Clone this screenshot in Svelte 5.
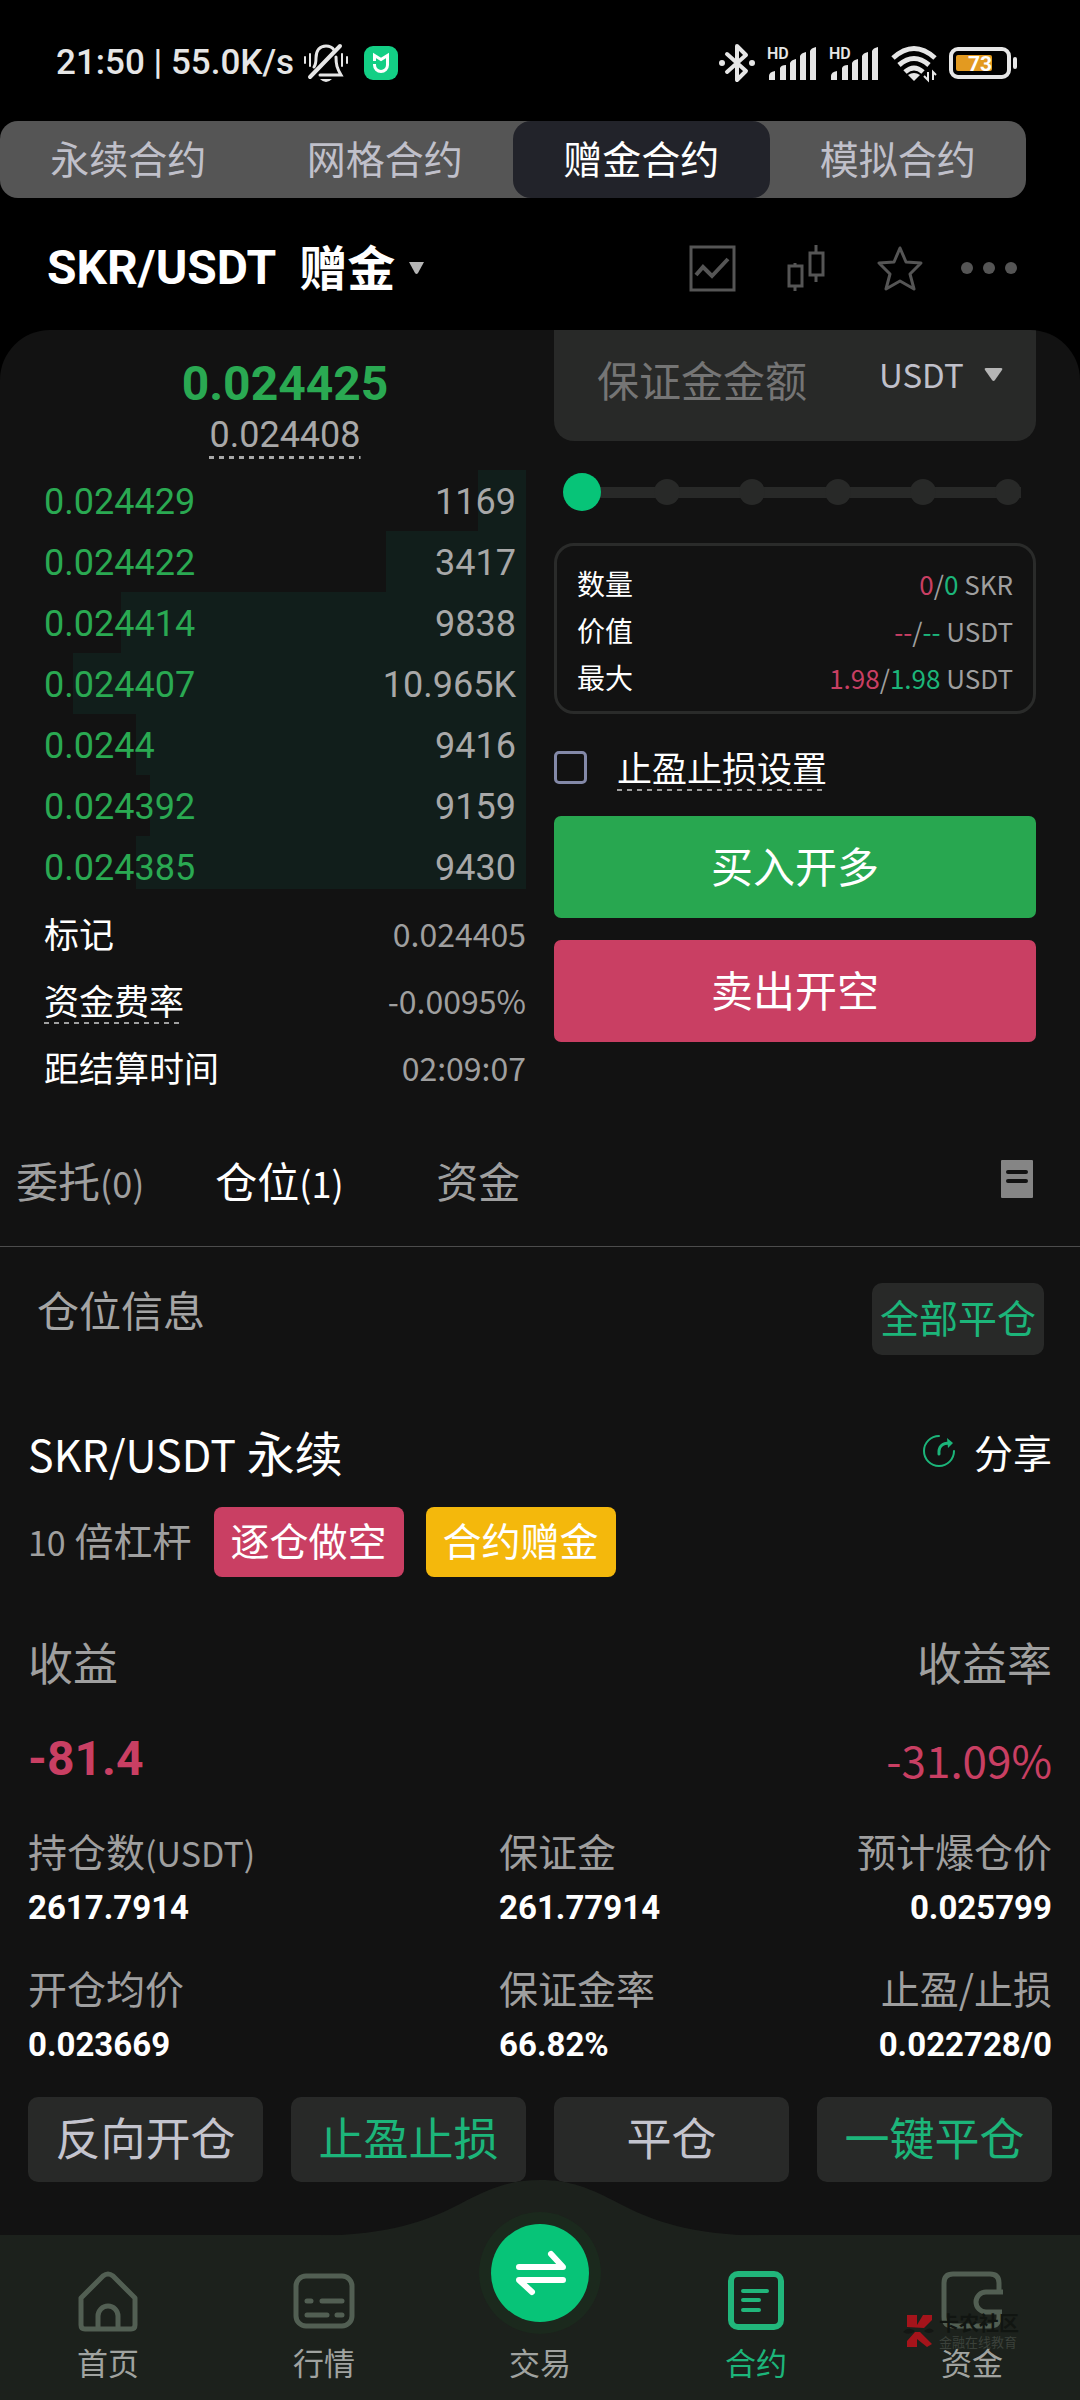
<script lang="ts">
  const modes = ['永续合约', '网格合约', '赠金合约', '模拟合约'];
  let mode = $state('赠金合约');

  // depth: share of the column width covered by the bar
  const bids = [
    { price: '0.024429', amount: '1169', depth: 10 },
    { price: '0.024422', amount: '3417', depth: 29 },
    { price: '0.024414', amount: '9838', depth: 84 },
    { price: '0.024407', amount: '10.965K', depth: 94 },
    { price: '0.0244', amount: '9416', depth: 81 },
    { price: '0.024392', amount: '9159', depth: 78 },
    { price: '0.024385', amount: '9430', depth: 81 }
  ];

  const limits = [
    { label: '数量', short: '0', long: '0', unit: 'SKR' },
    { label: '价值', short: '--', long: '--', unit: 'USDT' },
    { label: '最大', short: '1.98', long: '1.98', unit: 'USDT' }
  ];

  const lists = [
    { label: '委托', count: '(0)' },
    { label: '仓位', count: '(1)' },
    { label: '资金', count: '' }
  ];
  let list = $state('仓位');

  const details = [
    { label: '持仓数', unit: '(USDT)', value: '2617.7914' },
    { label: '保证金', unit: '', value: '261.77914' },
    { label: '预计爆仓价', unit: '', value: '0.025799' },
    { label: '开仓均价', unit: '', value: '0.023669' },
    { label: '保证金率', unit: '', value: '66.82%' },
    { label: '止盈/止损', unit: '', value: '0.022728/0' }
  ];

  const actions = [
    { label: '反向开仓', accent: false },
    { label: '止盈止损', accent: true },
    { label: '平仓', accent: false },
    { label: '一键平仓', accent: true }
  ];

  let percent = $state(0);
  let stopLoss = $state(false);
</script>

{#snippet signal()}
  <svg width="50" height="36" viewBox="0 0 50 36" fill="#e6e6e6">
    <text class="hd" x="0" y="14">HD</text>
    <path d="M2 31q0-4 6-5v9h-6zM13 23q1-3 6-3v15h-6zM23 18q1-3 6-4v21h-6zM33 11q1-3 6-4v28h-6zM43 6q1-3 6-4v33h-6z" />
  </svg>
{/snippet}

<div class="app">
  <div class="status">
    <div class="status-left">
      <span>21:50 | 55.0K/s</span>
      <svg width="46" height="40" viewBox="0 0 46 40" fill="none" stroke="#e6e6e6" stroke-width="3" stroke-linecap="round">
        <path d="M2 14v6M7 11v12M39 11v12M44 14v6" stroke-width="2" />
        <path d="M11 24c2-3 2-6 2-9C13 7 17 3 23 3c4 0 6 1 8 4M33 14c0 8 1 11 5 18H17" />
        <path d="M7 34L37 3" stroke-width="4" />
        <path d="M17 36h12q-6 6-12 0z" fill="#e6e6e6" stroke="none" />
      </svg>
      <svg class="mi" width="34" height="34" viewBox="0 0 34 34">
        <rect width="34" height="34" rx="9" fill="#13cf85" />
        <path d="M10.500 15V9.500l6.500 4 6.500-4V15M10.500 18v1a6.500 6.500 0 0 0 13 0v-5" fill="none" stroke="#fff" stroke-width="3" />
      </svg>
    </div>
    <div class="status-right">
      <svg width="36" height="40" viewBox="0 0 36 40" fill="none" stroke="#e6e6e6" stroke-width="4" stroke-linejoin="round" stroke-linecap="round">
        <path d="M8 11l19 17-9 9V3l9 9L8 29" />
        <circle cx="3" cy="20" r="3" fill="#e6e6e6" stroke="none" />
        <circle cx="33" cy="20" r="3" fill="#e6e6e6" stroke="none" />
      </svg>
      {@render signal()}
      {@render signal()}
      <svg width="46" height="36" viewBox="0 0 46 36" fill="none" stroke="#e6e6e6" stroke-width="5">
        <path d="M2 13q21-19 42 0M8 20q15-13 30 0M14 27q9-8 18 0" />
        <path d="M17 30q6-4 12 0l-6 6z" fill="#e6e6e6" stroke="none" />
        <path d="M37 27v8l-4-4M42 35v-8l3 3" stroke-width="2" />
      </svg>
      <svg width="68" height="32" viewBox="0 0 68 32">
        <rect x="2" y="2" width="58" height="28" rx="7" fill="none" stroke="#e6e6e6" stroke-width="4" />
        <rect x="7" y="8" width="36" height="16" rx="2" fill="#e39a20" />
        <rect x="64" y="10" width="4" height="12" rx="2" fill="#e6e6e6" />
        <text class="charge" x="31" y="24">73</text>
      </svg>
    </div>
  </div>

  <div class="modes">
    {#each modes as item}
      <button class:active={item === mode} onclick={() => (mode = item)}>{item}</button>
    {/each}
  </div>

  <header>
    <button class="pair">
      <span class="pair-name">SKR/USDT</span>
      <span class="pair-type">赠金</span>
      <svg width="17" height="14" viewBox="0 0 17 14"><path d="M1 1h15L10 12q-1.500 2-3 0z" fill="#b5b5b5" /></svg>
    </button>
    <div class="tools">
      <button aria-label="分时">
        <svg width="46" height="46" viewBox="0 0 46 46" fill="none" stroke="#555" stroke-width="3">
          <rect x="2" y="2" width="43" height="43" />
          <path d="M7 30l7-8 9 9 16-17" stroke-width="4" />
        </svg>
      </button>
      <button aria-label="K线">
        <svg width="46" height="46" viewBox="0 0 46 46" fill="none" stroke="#555" stroke-width="3">
          <path d="M6 21h13v20H6zM12 18v3M12 41v5M27 8h13v22H27zM33 0v8M33 30v7" />
        </svg>
      </button>
      <button aria-label="收藏">
        <svg width="46" height="46" viewBox="0 0 46 46" fill="none" stroke="#555" stroke-width="3" stroke-linejoin="round">
          <path d="M23 3l6 14 15 1-11 11 4 15-14-8-14 8 4-15L2 18l15-1z" />
        </svg>
      </button>
      <button aria-label="更多">
        <svg width="56" height="14" viewBox="0 0 56 14" fill="#555">
          <circle cx="6" cy="7" r="6" /><circle cx="28" cy="7" r="6" /><circle cx="50" cy="7" r="6" />
        </svg>
      </button>
    </div>
  </header>

  <main>
    <section class="trade">
      <div class="book">
        <div class="last">0.024425</div>
        <div class="index"><span>0.024408</span></div>
        <div class="bids">
          {#each bids as bid}
            <div class="bid">
              <div class="depth" style="width: {bid.depth}%"></div>
              <span class="price">{bid.price}</span>
              <span class="amount">{bid.amount}</span>
            </div>
          {/each}
        </div>
        <dl class="rates">
          <div><dt>标记</dt><dd>0.024405</dd></div>
          <div><dt class="dashed">资金费率</dt><dd>-0.0095%</dd></div>
          <div><dt>距结算时间</dt><dd>02:09:07</dd></div>
        </dl>
      </div>

      <div class="order">
        <div class="margin">
          <input type="text" placeholder="保证金金额" aria-label="保证金金额" />
          <select aria-label="单位"><option>USDT</option></select>
          <svg width="19" height="15" viewBox="0 0 19 15"><path d="M2 1h15q2 0 1 2l-7 10q-1.500 2-3 0L1 3q-1-2 1-2z" fill="#b5b5b5" /></svg>
        </div>

        <div class="slider">
          <div class="stops">
            {#each Array(6) as _}<i></i>{/each}
          </div>
          <input type="range" min="0" max="100" step="20" bind:value={percent} aria-label="保证金比例" />
        </div>

        <div class="limits">
          {#each limits as row}
            <div>
              <span>{row.label}</span>
              <span class="values"><span class="red">{row.short}</span>/<span class="green">{row.long}</span> {row.unit}</span>
            </div>
          {/each}
        </div>

        <label class="stop">
          <input type="checkbox" bind:checked={stopLoss} />
          <span class="dashed">止盈止损设置</span>
        </label>

        <button class="submit buy">买入开多</button>
        <button class="submit sell">卖出开空</button>
      </div>
    </section>

    <div class="lists">
      {#each lists as item}
        <button class:active={item.label === list} onclick={() => (list = item.label)}>{item.label}<span>{item.count}</span></button>
      {/each}
      <button class="records" aria-label="记录">
        <svg width="32" height="38" viewBox="0 0 32 38">
          <rect width="32" height="38" rx="1" fill="#858585" />
          <path d="M7 12h18M7 21h18" stroke="#121212" stroke-width="4" stroke-linecap="round" />
        </svg>
      </button>
    </div>

    <div class="summary">
      <span>仓位信息</span>
      <button>全部平仓</button>
    </div>

    <section class="position">
      <div class="title">
        <h2><span>SKR/USDT</span> 永续</h2>
        <button class="share">
          <svg width="33" height="34" viewBox="0 0 33 34" fill="none" stroke="#1cb57a" stroke-width="2" stroke-linecap="round">
            <path d="M16 2A15 15 0 1 0 31 17" />
            <path d="M16 20q-1-11 11-11" stroke-width="3" />
            <path d="M24 4l6 5-5 5z" fill="#1cb57a" stroke="none" />
          </svg>
          分享
        </button>
      </div>
      <div class="tags">
        <span class="leverage"><span>10</span> 倍杠杆</span>
        <span class="tag short">逐仓做空</span>
        <span class="tag bonus">合约赠金</span>
      </div>
      <div class="profit labels"><span>收益</span><span>收益率</span></div>
      <div class="profit figures"><strong>-81.4</strong><span>-31.09%</span></div>
      <dl class="details">
        {#each details as item}
          <div>
            <dt>{item.label}<span>{item.unit}</span></dt>
            <dd>{item.value}</dd>
          </div>
        {/each}
      </dl>
      <div class="actions">
        {#each actions as action}
          <button class:accent={action.accent}>{action.label}</button>
        {/each}
      </div>
    </section>
  </main>

  <nav>
    <svg class="hump" width="440" height="56" viewBox="0 0 440 56" fill="#1c211c">
      <path d="M0 56C70 54 105 42 140 24C170 8 190 0 220 0C250 0 270 8 300 24C335 42 370 54 440 56z" />
    </svg>
    <a href="#home">
      <svg width="64" height="64" viewBox="0 0 64 64" fill="none" stroke="#525f53" stroke-width="5" stroke-linejoin="round">
        <path d="M5 28L27 6q5-4 10 0l22 22v27q0 4-4 4H9q-4 0-4-4z" />
        <path d="M22 59V46a10 10 0 0 1 20 0v13" />
      </svg>
      首页
    </a>
    <a href="#market">
      <svg width="64" height="64" viewBox="0 0 64 64" fill="none" stroke="#525f53" stroke-width="5" stroke-linecap="round">
        <rect x="4" y="6" width="56" height="50" rx="10" />
        <path d="M15 31h4M30 31h20M15 45h20M45 45h5" />
      </svg>
      行情
    </a>
    <a class="trade-link" href="#trade">
      <svg class="swap" width="124" height="124" viewBox="0 0 124 124">
        <circle cx="62" cy="62" r="61" fill="#1b291d" />
        <circle cx="62" cy="62" r="49" fill="#07c478" />
        <path d="M41 56h44L73 43M85 69H41l13 12" fill="none" stroke="#fff" stroke-width="6" stroke-linecap="round" stroke-linejoin="round" />
      </svg>
      交易
    </a>
    <a class="active" href="#futures">
      <svg width="64" height="64" viewBox="0 0 64 64" fill="none" stroke="#21b67b" stroke-linecap="round">
        <rect x="7" y="4" width="50" height="53" rx="7" stroke-width="6" />
        <path d="M19 21h24M19 30h16M19 40h16" stroke-width="4" />
      </svg>
      合约
    </a>
    <a href="#assets">
      <svg width="64" height="64" viewBox="0 0 64 64" fill="none" stroke="#525f53" stroke-width="5">
        <path d="M59 22V13q0-9-9-9H13Q4 4 4 13v34q0 9 9 9h37q9 0 9-9v-5" />
        <path d="M63 22H46a10 10 0 0 0 0 20h16" />
      </svg>
      资金
    </a>
    <div class="watermark">
      <svg width="32" height="34" viewBox="0 0 32 34" fill="#a5141b">
        <path d="M4 1h10v10l6-10h9v5l-8 8-17-1zM4 33v-6l8-9h5l12 12-5 3-10-8v8z" />
        <path d="M0 18q5-6 12-1-6 5-12 1zM21 17q6-5 10 0-5 4-10 0z" fill="#141714" />
      </svg>
      <div><b>卡农社区</b><small>金融在线教育</small></div>
    </div>
  </nav>
</div>

<style>
  :global(body) {
    margin: 0;
    background: #000;
  }

  .app {
    font-family: "Noto Sans CJK SC", sans-serif;
    color: #fff;
    background: #000;
  }

  button {
    margin: 0;
    padding: 0;
    border: 0;
    background: none;
    color: inherit;
    font-family: inherit;
    font-size: inherit;
    white-space: nowrap;
    cursor: pointer;
  }

  /* the CJK face sits low in its line box */
  .modes button,
  .summary button,
  .submit,
  .actions button,
  .pair-type {
    padding-bottom: 6px;
  }

  svg {
    display: block;
    flex: none;
    overflow: visible;
  }

  .status {
    display: flex;
    justify-content: space-between;
    align-items: center;
    height: 121px;
    padding: 5px 63px 0 56px;
    box-sizing: border-box;
    color: #e6e6e6;
  }

  .status-left,
  .status-right {
    display: flex;
    align-items: center;
  }

  .status-left {
    gap: 9px;
    font: 500 35px/40px Roboto, sans-serif;
  }

  .mi {
    margin-left: 6px;
  }

  .status-right {
    gap: 12px;
  }

  .hd {
    font: 600 16px Roboto, sans-serif;
  }

  .charge {
    font: bold 21px Roboto, sans-serif;
    fill: #fff;
    text-anchor: middle;
  }

  .modes {
    display: flex;
    width: 95%;
    border-radius: 18px;
    background: #555;
  }

  .modes button {
    flex: 1;
    height: 77px;
    border-radius: 18px;
    font-size: 39px;
    color: #c0c0ca;
  }

  .modes .active {
    background: #22232a;
    color: #fff;
  }

  header {
    display: flex;
    justify-content: space-between;
    align-items: center;
    height: 132px;
    padding: 8px 63px 0 47px;
    box-sizing: border-box;
  }

  .pair {
    display: flex;
    align-items: center;
    gap: 13px;
    font-size: 48px;
    font-weight: bold;
    line-height: 60px;
  }

  .pair-name {
    margin-right: 10px;
    font-family: Roboto, sans-serif;
  }

  .tools {
    display: flex;
    align-items: center;
    gap: 48px;
  }

  .tools button:last-child {
    margin-left: -10px;
  }

  main {
    overflow: hidden;
    border-radius: 50px 50px 0 0;
    background: #121212;
  }

  .trade {
    display: grid;
    grid-template-columns: repeat(2, minmax(0, 1fr));
    gap: 28px;
    padding: 0 44px;
  }

  .book {
    padding-top: 25px;
  }

  .last {
    font: bold 48px/58px Roboto, sans-serif;
    color: #2aa952;
    text-align: center;
  }

  .index {
    display: flex;
    justify-content: center;
    font: 36px/44px Roboto, sans-serif;
    color: #a8a8a8;
  }

  .index span {
    padding-bottom: 2px;
    background: repeating-linear-gradient(90deg, #a8a8a8 0 5px, transparent 5px 10px) bottom / 100% 3px no-repeat;
  }

  .bids {
    height: 419px;
    margin-top: 11px;
    overflow: hidden;
  }

  .bid {
    position: relative;
    display: flex;
    justify-content: space-between;
    height: 61px;
    padding-right: 10px;
    font: 36px/65px Roboto, sans-serif;
  }

  .depth {
    position: absolute;
    top: 0;
    right: 0;
    height: 100%;
    background: #111e1b;
  }

  .price,
  .amount {
    position: relative;
  }

  .price {
    color: #2aa952;
  }

  .amount {
    color: #a8a8a8;
  }

  dl,
  dd {
    margin: 0;
  }

  .rates {
    margin-top: 10px;
  }

  .rates div {
    display: flex;
    justify-content: space-between;
    align-items: center;
    height: 67px;
  }

  .rates dt,
  .stop {
    font-size: 35px;
    line-height: 48px;
  }

  .rates dd {
    font-size: 32px;
    color: #9f9f9f;
  }

  .dashed {
    background: repeating-linear-gradient(90deg, #a0a0a0 0 5px, transparent 5px 10px) bottom / 100% 2px no-repeat;
  }

  .margin {
    display: flex;
    align-items: center;
    height: 111px;
    padding: 0 33px 0 43px;
    box-sizing: border-box;
    border-radius: 0 0 20px 20px;
    background: #282928;
  }

  .margin input {
    flex: 1;
    min-width: 0;
    height: 80px;
    margin-bottom: 14px;
    padding: 0;
    border: 0;
    outline: 0;
    background: none;
    color: #fff;
    font-family: inherit;
    font-size: 42px;
  }

  .margin input::placeholder {
    color: #757575;
    opacity: 1;
  }

  .margin select {
    appearance: none;
    margin: 0 20px 24px 0;
    padding: 0;
    border: 0;
    outline: 0;
    background: none;
    color: #c0c0ca;
    font-family: inherit;
    font-size: 33px;
  }

  .margin svg {
    margin-bottom: 22px;
  }

  .slider {
    display: grid;
    align-items: center;
    margin: 32px 9px;
  }

  .slider input,
  .stops {
    grid-area: 1 / 1;
  }

  .stops {
    display: flex;
    justify-content: space-between;
    margin: 0 6px;
    background: linear-gradient(#282928, #282928) center / 100% 11px no-repeat;
  }

  .stops i {
    width: 26px;
    height: 26px;
    border-radius: 50%;
    background: #282928;
  }

  .slider input {
    appearance: none;
    width: 100%;
    height: 38px;
    margin: 0;
    background: none;
  }

  .slider input::-webkit-slider-thumb {
    appearance: none;
    width: 38px;
    height: 38px;
    border-radius: 50%;
    background: #07c478;
  }

  .limits {
    padding: 14px 20px 10px;
    border: 3px solid #2a2b2a;
    border-radius: 20px;
    font-size: 28px;
    line-height: 47px;
  }

  .limits div {
    display: flex;
    justify-content: space-between;
  }

  .values {
    font-size: 26px;
    color: #9f9f9f;
  }

  .red {
    color: #c93f63;
  }

  .green {
    color: #1cb57a;
  }

  .stop {
    display: flex;
    align-items: center;
    gap: 30px;
    margin: 29px 0 25px;
  }

  .stop input {
    appearance: none;
    width: 33px;
    height: 33px;
    margin: 0;
    border: 3px solid #8489a8;
    border-radius: 5px;
  }

  .stop input:checked {
    background: #07c478;
  }

  .submit {
    display: block;
    width: 100%;
    height: 102px;
    border-radius: 7px;
    font-size: 42px;
  }

  .buy {
    background: #28a750;
  }

  .sell {
    margin-top: 22px;
    background: #c93f63;
  }

  .lists {
    display: flex;
    align-items: center;
    gap: 71px;
    height: 118px;
    margin-top: 20px;
    padding: 0 47px 8px 16px;
    border-bottom: 1px solid #4c4c4c;
  }

  .lists button {
    min-width: 127px;
    font-size: 42px;
    color: #9f9f9f;
  }

  .lists .active {
    color: #fff;
  }

  .lists span {
    font-size: 36px;
  }

  .lists .records {
    min-width: 0;
    margin-left: auto;
  }

  .summary {
    display: flex;
    justify-content: space-between;
    align-items: flex-start;
    padding: 36px 36px 0 37px;
    font-size: 42px;
    line-height: 52px;
    color: #a5a5a5;
  }

  .summary button {
    height: 72px;
    padding-left: 8px;
    padding-right: 8px;
    border-radius: 10px;
    background: #282928;
    color: #1cb57a;
    font-size: 39px;
  }

  .position {
    padding: 64px 28px 53px;
  }

  .title {
    display: flex;
    justify-content: space-between;
    align-items: center;
    height: 64px;
  }

  h2 {
    margin: 0;
    font-size: 48px;
    font-weight: normal;
    line-height: 64px;
  }

  h2 span {
    font-size: 43px;
    line-height: 1;
  }

  .share {
    display: flex;
    align-items: center;
    gap: 18px;
    font-size: 39px;
  }

  .tags {
    display: flex;
    align-items: center;
    gap: 22px;
    margin-top: 24px;
    font-size: 39px;
    line-height: 64px;
  }

  .leverage {
    padding-bottom: 6px;
    color: #9f9f9f;
  }

  .leverage span,
  .details dt span {
    font-size: 34px;
    line-height: 1;
  }

  .tag {
    padding: 0 17px 6px;
    border-radius: 8px;
  }

  .short {
    background: #c93f63;
  }

  .bonus {
    background: #f4b80c;
  }

  .profit {
    display: flex;
    justify-content: space-between;
    align-items: center;
    line-height: 64px;
  }

  .labels {
    margin-top: 53px;
    font-size: 45px;
    color: #9f9f9f;
  }

  .figures {
    margin-top: 33px;
    font-size: 44px;
    color: #c93f63;
  }

  .figures strong {
    font-family: Roboto, sans-serif;
    font-size: 48px;
  }

  .details {
    display: grid;
    grid-template-columns: 46fr 27fr 27fr;
    gap: 21px 0;
    margin-top: 30px;
    line-height: 58px;
  }

  .details div:nth-child(3n) {
    text-align: right;
  }

  .details dt {
    font-size: 39px;
    color: #9f9f9f;
  }

  .details dd {
    font-family: Roboto, sans-serif;
    font-size: 33px;
    font-weight: bold;
  }

  .actions {
    display: grid;
    grid-template-columns: repeat(4, 1fr);
    gap: 28px;
    margin-top: 23px;
  }

  .actions button {
    height: 85px;
    border-radius: 10px;
    background: #282928;
    color: #c4c4ce;
    font-size: 45px;
  }

  .actions .accent {
    color: #1cb57a;
  }

  nav {
    position: relative;
    display: grid;
    grid-template-columns: repeat(5, 1fr);
    padding: 35px 0 18px;
    background: #1c211c;
  }

  nav a {
    position: relative;
    display: flex;
    flex-direction: column;
    align-items: center;
    gap: 8px;
    font-size: 31px;
    line-height: 40px;
    color: #a0a3a0;
    text-decoration: none;
  }

  nav .active {
    color: #1cb57a;
  }

  .trade-link {
    justify-content: flex-end;
  }

  .hump {
    position: absolute;
    bottom: 100%;
    left: 50%;
    margin: 0 0 -1px -220px;
  }

  .swap {
    position: absolute;
    bottom: 47px;
  }

  .watermark {
    position: absolute;
    right: 61px;
    bottom: 51px;
    display: flex;
    align-items: center;
    gap: 4px;
  }

  .watermark div {
    display: flex;
    flex-direction: column;
    gap: 1px;
  }

  .watermark b {
    font-size: 20px;
    line-height: 22px;
    color: #111511;
  }

  .watermark small {
    font-size: 13px;
    line-height: 14px;
    color: #3b413b;
  }
</style>
